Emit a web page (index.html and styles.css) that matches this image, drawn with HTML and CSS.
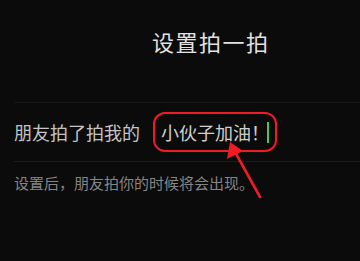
FILE: index.html
```html
<!DOCTYPE html>
<html lang="zh-CN">
<head>
<meta charset="UTF-8" />
<meta name="viewport" content="width=device-width, initial-scale=1.0"/>
<title>设置拍一拍</title>
<link rel="stylesheet" href="styles.css">
</head>
<body>
<header class="top-bar">
    <h1 class="title">设置拍一拍</h1>
</header>
<main>
    <div class="pat-row">
        <span class="pat-label">朋友拍了拍我的</span>
        <div class="pat-input">
            <span class="pat-text">小伙子加油！</span>
            <span class="cursor"></span>
        </div>
    </div>
    <p class="hint">设置后，朋友拍你的时候将会出现。</p>
</main>

<!-- 标注箭头 -->
<svg class="note-arrow" width="360" height="261" viewBox="0 0 360 261">
    <line x1="260" y1="197" x2="234" y2="150" stroke="#ee1c25" stroke-width="2.6" stroke-linecap="round"/>
    <polygon points="230,142 227,159 243,151" fill="#ee1c25"/>
</svg>
</body>
</html>
```

FILE: styles.css
```css
body {
    margin: 0;
    background: #0b0b0b;
    font-family: "Noto Sans CJK SC", "Noto Sans", sans-serif;
    width: 360px;
    height: 261px;
    overflow: hidden;
    position: relative;
}
.top-bar {
    height: 82px;
    display: flex;
    align-items: center;
    padding-left: 152px;
    box-sizing: border-box;
}
.title {
    margin: 0;
    font-size: 22px;
    font-weight: 400;
    letter-spacing: 1.5px;
    color: #e2e2e2;
}
main {
    padding-top: 20px;
}
.pat-row {
    margin-left: 14px;
    height: 60px;
    border-top: 1px solid #161616;
    border-bottom: 1px solid #1c1c1c;
    display: flex;
    align-items: center;
    box-sizing: border-box;
}
.pat-label {
    font-size: 18px;
    color: #c4c4c4;
    width: 139px;
}
.pat-input {
    width: 124px;
    height: 40px;
    box-sizing: border-box;
    border: 2.5px solid #ee1c25;
    border-radius: 12px;
    display: flex;
    align-items: center;
    padding-left: 6px;
}
.pat-text {
    font-size: 18px;
    color: #d0d0d0;
}
.cursor {
    width: 2px;
    height: 21px;
    background: #4fc35f;
    margin-left: -2px;
}
.hint {
    margin: 10px 0 0 14px;
    font-size: 15px;
    color: #858585;
}
.note-arrow {
    position: absolute;
    left: 0;
    top: 0;
}
```
